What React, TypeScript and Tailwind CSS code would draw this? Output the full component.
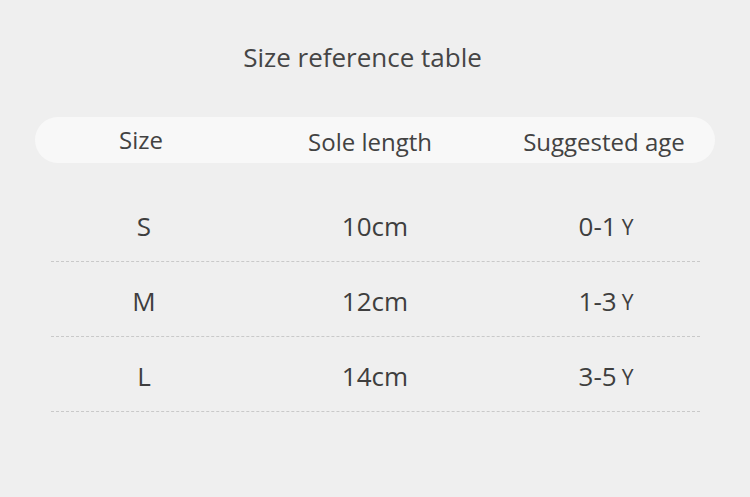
import React from 'react';

const rows = [
  { size: 'S', sole: '10cm', age: '0-1' },
  { size: 'M', sole: '12cm', age: '1-3' },
  { size: 'L', sole: '14cm', age: '3-5' },
];

export default function App() {
  return (
    <div
      className="w-[750px] h-[497px] bg-[#efefef] text-[#404040] overflow-hidden"
      style={{ fontFamily: '"Open Sans", "Noto Sans", sans-serif' }}
    >
      <h1 className="pt-[40px] pr-[25px] text-center text-[26px] leading-[34px] font-normal text-[#454545]">
        Size reference table
      </h1>

      <div className="mx-[35px] mt-[43px] h-[46px] rounded-full bg-[#f8f8f8] grid grid-cols-[212px_246px_222px] items-center text-[24px] text-[#424242]">
        <div className="text-center">Size</div>
        <div className="text-center pt-[3px]">Sole length</div>
        <div className="text-center pt-[3px]">Suggested age</div>
      </div>

      <div className="mt-[24px]">
        {rows.map((row) => (
          <div key={row.size} className="mx-[35px] relative">
            <div className="h-[75px] pt-[4px] grid grid-cols-[218px_244px_218px] items-center text-[26px] text-[#3e3e3e]">
              <div className="text-center">{row.size}</div>
              <div className="text-center">{row.sole}</div>
              <div className="text-center">
                {row.age}
                <span className="ml-[5px] text-[21px] align-[1px]">Y</span>
              </div>
            </div>
            <div className="absolute bottom-[0px] left-[16px] right-[15px] border-b border-dashed border-[#c9c9c9]" />
          </div>
        ))}
      </div>
    </div>
  );
}
